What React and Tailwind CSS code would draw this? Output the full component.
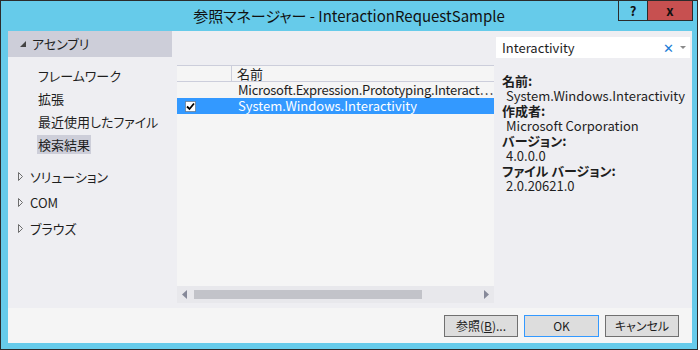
const JP = { fontFamily: '"Noto Sans CJK JP", "Noto Sans", sans-serif' };

const OpenArrow = () => (
  <svg width="6" height="6" viewBox="0 0 6 6" className="shrink-0">
    <path d="M6 0 L6 6 L0 6 Z" fill="#444" />
  </svg>
);

const ClosedArrow = () => (
  <svg width="5" height="9" viewBox="0 0 5 9" className="shrink-0">
    <path d="M0.5 0.5 L4.5 4.5 L0.5 8.5 Z" fill="none" stroke="#6d6d6d" />
  </svg>
);

const CheckBox = () => (
  <svg width="11" height="11" viewBox="0 0 11 11">
    <rect x="0.5" y="0.5" width="10" height="10" fill="#fff" stroke="#555" strokeDasharray="1 1" />
    <path d="M2 5.5 L4.5 8 L9 2.5" fill="none" stroke="#000" strokeWidth="1.8" />
  </svg>
);

const NAV = ['フレームワーク', '拡張', '最近使用したファイル', '検索結果'];
const GROUPS = ['ソリューション', 'COM', 'ブラウズ'];
const DETAILS = [
  ['名前:', 'System.Windows.Interactivity'],
  ['作成者:', 'Microsoft Corporation'],
  ['バージョン:', '4.0.0.0'],
  ['ファイル バージョン:', '2.0.20621.0'],
];

export default function App() {
  return (
    <div className="w-[700px] h-[350px] bg-white [font-feature-settings:'palt']" style={JP}>
      <div className="w-[698px] h-[350px] border border-[#2b2b2b] bg-[#66cbea] flex flex-col text-[#1e1e1e]">
        <div className="relative h-[30px] shrink-0 flex items-center justify-center text-[15px] text-[#111]">
          参照マネージャー - InteractionRequestSample
          <div className="absolute top-[-1px] right-[4px] flex">
            <div className="w-[30px] h-[21px] border border-[#2b2b2b] flex items-center justify-center text-[13px] font-bold">?</div>
            <div className="w-[45px] h-[21px] border border-l-0 border-[#2b2b2b] bg-[#c75050] flex items-center justify-center text-[13px] font-bold">x</div>
          </div>
        </div>

        <div className="flex-1 ml-[7px] mr-[5px] mb-[6px] flex flex-col bg-[#eeeef2]">
          <div className="flex flex-1 min-h-0">
            <div className="w-[164px] flex flex-col text-[13px]">
              <div className="h-[26px] bg-[#cdced9] flex items-center gap-[6px] pl-[12px]">
                <OpenArrow />
                <span>アセンブリ</span>
              </div>
              <div className="flex flex-col pl-[29px] pt-[9px] gap-[4px]">
                {NAV.map((n, i) => (
                  <div key={n} className="h-[19px] flex items-center">
                    <span className={`px-[1px] ${i === 3 ? 'bg-[#cdced9]' : ''}`}>{n}</span>
                  </div>
                ))}
              </div>
              <div className="flex flex-col pl-[10px] pt-[13px] gap-[7px]">
                {GROUPS.map((g) => (
                  <div key={g} className="h-[19px] flex items-center gap-[7px]">
                    <ClosedArrow />
                    <span>{g}</span>
                  </div>
                ))}
              </div>
            </div>

            <div className="w-[317px] ml-[5px] pt-[34px] pb-[5px] flex flex-col">
              <div className="flex-1 flex flex-col bg-[#f5f5f5] border-t border-[#cccedb] text-[13px]">
                <div className="h-[16px] flex border-b border-[#cccedb]">
                  <div className="w-[55px] border-r border-[#cccedb]" />
                  <div className="pl-[5px] leading-[15px]">名前</div>
                </div>
                <div className="h-[16px] flex">
                  <div className="w-[55px] shrink-0" />
                  <div className="pl-[6px] leading-[16px] whitespace-nowrap tracking-[-0.25px]">Microsoft.Expression.Prototyping.Interact⋯</div>
                </div>
                <div className="h-[16px] flex bg-[#3399ff] text-white">
                  <div className="w-[55px] flex items-center pl-[8px]">
                    <CheckBox />
                  </div>
                  <div className="pl-[6px] leading-[16px]">System.Windows.Interactivity</div>
                </div>
                <div className="flex-1" />
                <div className="h-[17px] bg-[#e8e8ec] flex items-center px-[5px] gap-[7px]">
                  <svg width="5" height="9" viewBox="0 0 5 9"><path d="M5 0 L0 4.5 L5 9 Z" fill="#868999" /></svg>
                  <div className="w-[228px] h-[9px] bg-[#c2c3c9]" />
                  <div className="flex-1" />
                  <svg width="5" height="9" viewBox="0 0 5 9"><path d="M0 0 L5 4.5 L0 9 Z" fill="#868999" /></svg>
                </div>
              </div>
            </div>

            <div className="flex-1 ml-[2px] pt-[6px] pr-[2px] flex flex-col text-[13px]">
              <div className="h-[21px] bg-white flex items-center pl-[6px] pr-[4px]">
                <span className="flex-1">Interactivity</span>
                <span className="text-[#1c7cd6] text-[13px] mr-[6px]">✕</span>
                <svg width="6" height="3" viewBox="0 0 6 3"><path d="M0 0 L6 0 L3 3 Z" fill="#8a8a8a" /></svg>
              </div>
              <div className="pl-[6px] pt-[15px] flex flex-col">
                {DETAILS.map(([k, v]) => (
                  <div key={k}>
                    <div className="h-[15px] leading-[15px] font-bold">{k}</div>
                    <div className="h-[15px] leading-[15px] pl-[4px]">{v}</div>
                  </div>
                ))}
              </div>
            </div>
          </div>

          <div className="h-[35px] bg-[#f5f5f5] flex items-center justify-end gap-[6px] pr-[13px] text-[12px]">
            <button className="w-[74px] h-[22px] bg-[#dddddd] border border-[#707070]">
              参照(<span className="underline">B</span>)...
            </button>
            <button className="w-[75px] h-[22px] bg-[#dddddd] border border-[#3399ff]">OK</button>
            <button className="w-[74px] h-[22px] bg-[#dddddd] border border-[#707070]">キャンセル</button>
          </div>
        </div>
      </div>
    </div>
  );
}
